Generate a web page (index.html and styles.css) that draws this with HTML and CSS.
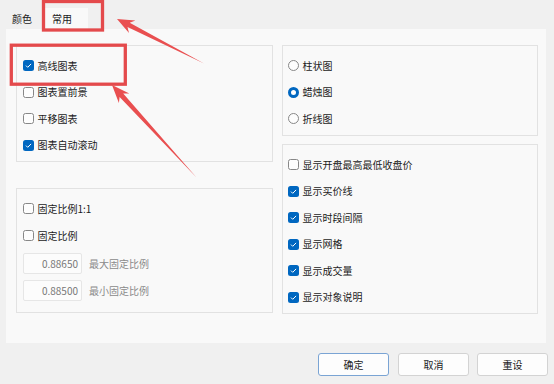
FILE: index.html
```html
<!DOCTYPE html>
<html lang="zh-CN">
<head>
<meta charset="utf-8">
<title>设置</title>
<link rel="stylesheet" href="styles.css">
</head>
<body>
<div class="window">
  <div class="tabs">
    <div class="tab tab-color">颜色</div>
    <div class="tab tab-common active">常用</div>
  </div>
  <div class="panel">
    <div class="col">
      <div class="group g1">
        <div class="row"><span class="cb on"><svg viewBox="0 0 11 11"><path d="M3 5.6 L4.7 7.3 L8.1 3.9"/></svg></span>高线图表</div>
        <div class="row"><span class="cb"></span>图表置前景</div>
        <div class="row"><span class="cb"></span>平移图表</div>
        <div class="row"><span class="cb on"><svg viewBox="0 0 11 11"><path d="M3 5.6 L4.7 7.3 L8.1 3.9"/></svg></span>图表自动滚动</div>
      </div>
      <div class="group g2">
        <div class="row"><span class="cb"></span>固定比例1:1</div>
        <div class="row"><span class="cb"></span>固定比例</div>
        <div class="field first"><span class="input">0.88650</span><span class="flabel">最大固定比例</span></div>
        <div class="field"><span class="input">0.88500</span><span class="flabel">最小固定比例</span></div>
      </div>
    </div>
    <div class="col">
      <div class="group g3">
        <div class="row"><span class="rb"></span>柱状图</div>
        <div class="row"><span class="rb on"></span>蜡烛图</div>
        <div class="row"><span class="rb"></span>折线图</div>
      </div>
      <div class="group g4">
        <div class="row"><span class="cb"></span>显示开盘最高最低收盘价</div>
        <div class="row"><span class="cb on"><svg viewBox="0 0 11 11"><path d="M3 5.6 L4.7 7.3 L8.1 3.9"/></svg></span>显示买价线</div>
        <div class="row"><span class="cb on"><svg viewBox="0 0 11 11"><path d="M3 5.6 L4.7 7.3 L8.1 3.9"/></svg></span>显示时段间隔</div>
        <div class="row"><span class="cb on"><svg viewBox="0 0 11 11"><path d="M3 5.6 L4.7 7.3 L8.1 3.9"/></svg></span>显示网格</div>
        <div class="row"><span class="cb on"><svg viewBox="0 0 11 11"><path d="M3 5.6 L4.7 7.3 L8.1 3.9"/></svg></span>显示成交量</div>
        <div class="row"><span class="cb on"><svg viewBox="0 0 11 11"><path d="M3 5.6 L4.7 7.3 L8.1 3.9"/></svg></span>显示对象说明</div>
      </div>
    </div>
  </div>
  <div class="buttons">
    <div class="btn default">确定</div>
    <div class="btn b2">取消</div>
    <div class="btn b3">重设</div>
  </div>
  <svg class="overlay" viewBox="0 0 554 384" width="554" height="384">
    <rect class="mark" x="43.5" y="1.5" width="59" height="28.5"/>
    <rect class="mark" x="11.3" y="45.2" width="114" height="39"/>
    <polygon class="arrow" points="117,19 129,32.9 127.5,27.1 204,63.5 129.7,22.7 135.4,20.5"/>
    <polygon class="arrow" points="112,85 118.9,103 119.6,97 196.5,177.5 123.2,93.6 129.3,93.6"/>
  </svg>
</div>
</body>
</html>
```
FILE: styles.css
```css
* { box-sizing: border-box; }
html, body { margin: 0; padding: 0; }
body {
  background: #f0f0f0;
  font-family: "Noto Sans CJK SC", "Noto Sans", sans-serif;
  font-size: 10px;
  color: #1b1b1b;
}
.window {
  position: relative;
  width: 554px;
  height: 384px;
  overflow: hidden;
}
.tabs {
  display: flex;
  align-items: flex-end;
  height: 29px;
  padding-left: 6px;
}
.tab {
  height: 21px;
  line-height: 21px;
}
.tab-color { width: 37px; padding-left: 6px; }
.tab-common { width: 45px; padding-left: 9px; background: #f9f9f9; }
.panel {
  margin-left: 6px;
  width: 540px;
  height: 314px;
  background: #f9f9f9;
  padding: 16px 0 0 10px;
  display: grid;
  grid-template-columns: 257px 256px;
  column-gap: 9px;
  align-items: start;
}
.col { display: flex; flex-direction: column; }
.group {
  border: 1px solid #e2e2e2;
  background: #f9f9f9;
  padding-top: 11.5px;
  display: flex;
  flex-direction: column;
  gap: 10.6px;
}
.g1 { height: 117px; padding-left: 6px; }
.g2 { height: 125px; padding-left: 6px; margin-top: 26px; gap: 11px; }
.g3 { height: 91px; padding-left: 5px; gap: 10.5px; }
.g4 { height: 170px; padding-left: 5px; margin-top: 8px; gap: 10.5px; }
.row {
  display: flex;
  align-items: center;
  height: 16px;
  line-height: 16px;
  white-space: nowrap;
}
.cb, .rb {
  flex: none;
  width: 11px;
  height: 11px;
  margin-right: 3.5px;
}
.cb {
  border: 1px solid #878787;
  border-radius: 2.5px;
  background: #fdfdfd;
}
.cb.on {
  border: none;
  background: #0067c0;
}
.cb svg { display: block; width: 11px; height: 11px; }
.cb svg path { fill: none; stroke: #fff; stroke-width: 1; }
.rb {
  border: 1px solid #878787;
  border-radius: 50%;
  background: #fdfdfd;
}
.rb.on {
  border: 3.5px solid #0067c0;
  background: #fff;
}
.field {
  display: flex;
  align-items: center;
  height: 21px;
}
.g2 .field.first { margin-top: -1.5px; }
.g2 .field + .field { margin-top: -5px; }
.input {
  width: 59px;
  height: 21px;
  line-height: 19px;
  border: 1px solid #e6e6e6;
  border-radius: 2px;
  background: #fcfcfc;
  color: #777;
  text-align: right;
  padding-right: 3px;
}
.flabel { margin-left: 7px; color: #8a8a8a; }
.buttons {
  display: flex;
  justify-content: flex-end;
  padding-right: 6px;
  margin-top: 10px;
}
.btn {
  width: 71px;
  height: 23px;
  line-height: 21px;
  text-align: center;
  border: 1px solid #d3d3d3;
  border-radius: 3px;
  background: #fdfdfd;
}
.btn.default { border-color: #7aa4d4; }
.b2 { margin-left: 9px; }
.b3 { margin-left: 8px; }
.overlay {
  position: absolute;
  left: 0;
  top: 0;
  pointer-events: none;
}
.mark { fill: none; stroke: #e44a4c; stroke-width: 3.3; }
.arrow { fill: #e94f50; }
```
